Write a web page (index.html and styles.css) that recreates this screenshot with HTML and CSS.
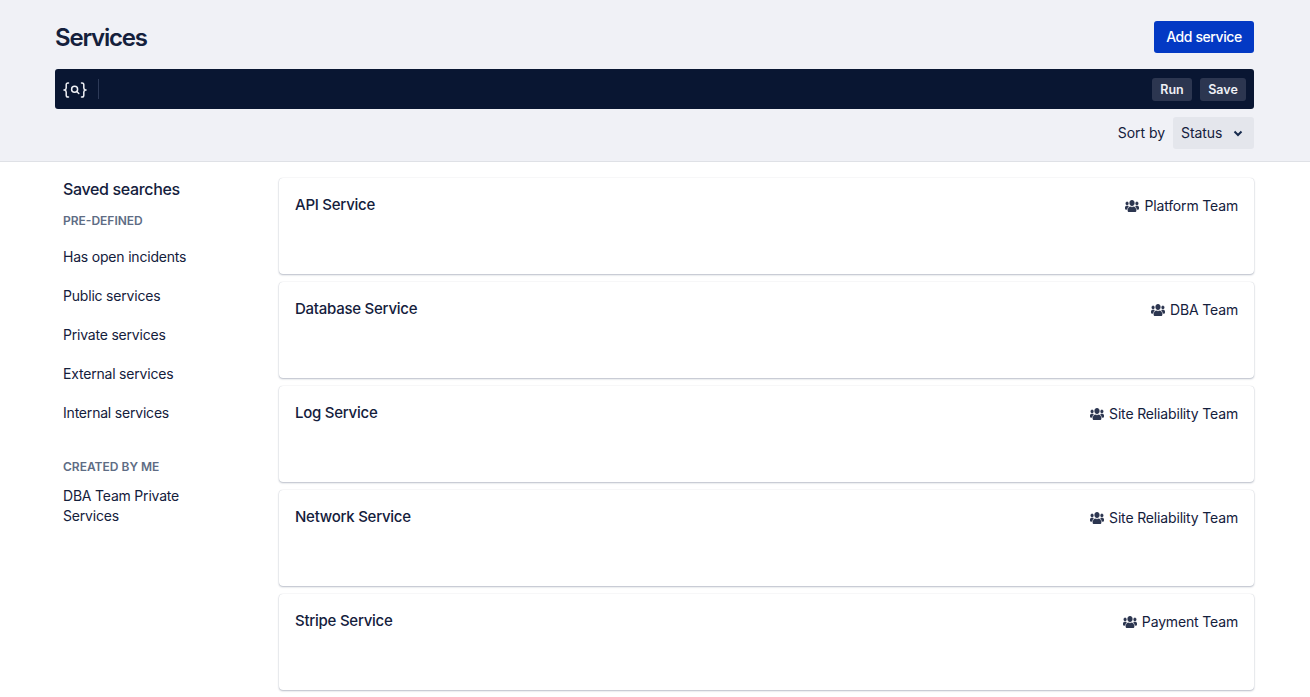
FILE: index.html
```html
<!DOCTYPE html>
<html>
<head>
  <title>Services</title>
  <link rel="stylesheet" href="styles.css">
</head>
<body>
  <svg class="icon-defs" width="0" height="0">
    <symbol id="users" viewBox="0 32 640 448" preserveAspectRatio="none">
      <path d="M96 224c35.3 0 64-28.7 64-64s-28.7-64-64-64-64 28.7-64 64 28.7 64 64 64zm448 0c35.3 0 64-28.7 64-64s-28.7-64-64-64-64 28.7-64 64 28.7 64 64 64zm32 32h-64c-17.6 0-33.5 7.1-45.1 18.6 40.3 22.1 68.9 62 75.1 109.4h66c17.7 0 32-14.3 32-32v-32c0-35.3-28.7-64-64-64zm-256 0c61.9 0 112-50.1 112-112S381.9 32 320 32 208 82.1 208 144s50.1 112 112 112zm76.8 32h-8.3c-20.8 10-43.9 16-68.5 16s-47.6-6-68.5-16h-8.3C179.6 288 128 339.6 128 403.2V432c0 26.5 21.5 48 48 48h288c26.5 0 48-21.5 48-48v-28.8c0-63.6-51.6-115.2-115.2-115.2zm-223.7-13.4C161.5 263.1 145.6 256 128 256H64c-35.3 0-64 28.7-64 64v32c0 17.7 14.3 32 32 32h65.9c6.3-47.4 34.9-87.3 75.2-109.4z"/>
    </symbol>
  </svg>

  <div class="page-header">
    <div class="title-row">
      <h1>Services</h1>
      <button class="add-btn">Add service</button>
    </div>
    <div class="query-bar">
      <svg class="query-icon" width="24" height="20" viewBox="0 -1.500 24 20" fill="none" stroke="#eef0f5" stroke-width="1.500" stroke-linecap="round">
        <path d="M5.500 2.500H5c-1.200 0-1.800.6-1.800 1.800v3.100c0 1.100-.5 1.700-1.700 2.100 1.200.4 1.700 1 1.700 2.100v3.100c0 1.200.6 1.800 1.800 1.800h.5"/>
        <path d="M18.500 2.500h.5c1.200 0 1.800.6 1.800 1.800v3.100c0 1.100.5 1.700 1.700 2.100-1.200.4-1.700 1-1.700 2.100v3.100c0 1.200-.6 1.800-1.800 1.800h-.5"/>
        <circle cx="11.600" cy="8.800" r="3"/>
        <path d="M13.800 11l2 2"/>
      </svg>
      <span class="query-divider"></span>
      <div class="query-actions">
        <button class="query-btn run-btn">Run</button>
        <button class="query-btn save-btn">Save</button>
      </div>
    </div>
    <div class="sort-row">
      <span>Sort by</span>
      <div class="sort-select">
        <span>Status</span>
        <svg width="10" height="7" viewBox="0 0 10 7" fill="none" stroke="#172b4d" stroke-width="2"><path d="M1.500 1.500L5 5l3.500-3.500"/></svg>
      </div>
    </div>
  </div>

  <div class="content">
    <div class="sidebar">
      <h3>Saved searches</h3>
      <h4>PRE-DEFINED</h4>
      <ul class="search-list">
        <li>Has open incidents</li>
        <li>Public services</li>
        <li>Private services</li>
        <li>External services</li>
        <li>Internal services</li>
      </ul>
      <h4 class="created">CREATED BY ME</h4>
      <ul class="search-list created-list">
        <li>DBA Team Private Services</li>
      </ul>
    </div>

    <div class="service-list">
      <div class="service-card">
        <span class="service-name">API Service</span>
        <span class="team"><svg class="team-icon"><use href="#users"/></svg>Platform Team</span>
      </div>
      <div class="service-card">
        <span class="service-name">Database Service</span>
        <span class="team"><svg class="team-icon"><use href="#users"/></svg>DBA Team</span>
      </div>
      <div class="service-card">
        <span class="service-name">Log Service</span>
        <span class="team"><svg class="team-icon"><use href="#users"/></svg>Site Reliability Team</span>
      </div>
      <div class="service-card">
        <span class="service-name">Network Service</span>
        <span class="team"><svg class="team-icon"><use href="#users"/></svg>Site Reliability Team</span>
      </div>
      <div class="service-card">
        <span class="service-name">Stripe Service</span>
        <span class="team"><svg class="team-icon"><use href="#users"/></svg>Payment Team</span>
      </div>
    </div>
  </div>
</body>
</html>
```

FILE: styles.css
```css
* {
  box-sizing: border-box;
}
body {
  margin: 0;
  background: #fff;
  color: #172b4d;
  font-family: Inter, "Liberation Sans", sans-serif;
  font-size: 14px;
  letter-spacing: -0.16px;
}
button {
  font-family: inherit;
  border: none;
}
.icon-defs {
  display: none;
}
.page-header {
  background: #f0f1f6;
  border-bottom: 1px solid #dfe1e6;
  height: 162px;
  padding: 21px 56px 0 55px;
}
.title-row {
  display: flex;
  justify-content: space-between;
  align-items: center;
  height: 32px;
}
h1 {
  margin: 0;
  font-size: 24px;
  font-weight: 600;
  letter-spacing: -1.2px;
  color: #14203c;
}
.add-btn {
  width: 100px;
  height: 32px;
  padding: 0 0 2px;
  background: #0339c4;
  color: #fff;
  border-radius: 3px;
  font-size: 14px;
  font-weight: 500;
  letter-spacing: -0.4px;
}
.query-bar {
  display: flex;
  align-items: center;
  height: 40px;
  margin-top: 16px;
  padding: 0 8px;
  background: #091632;
  border-radius: 3px;
}
.query-icon {
  flex: none;
}
.query-divider {
  width: 1px;
  height: 20px;
  margin-left: 11px;
  background: #2d3a58;
}
.query-actions {
  display: flex;
  gap: 8px;
  margin-left: auto;
}
.query-btn {
  height: 23px;
  padding: 0;
  background: #2c3650;
  color: #eef0f5;
  border-radius: 3px;
  font-size: 12.5px;
  font-weight: 600;
  letter-spacing: 0;
}
.run-btn {
  width: 40px;
}
.save-btn {
  width: 46px;
}
.sort-row {
  display: flex;
  justify-content: flex-end;
  align-items: center;
  gap: 8px;
  margin-top: 8px;
  color: #14203c;
  letter-spacing: -0.05px;
}
.sort-row span {
  position: relative;
  top: -1px;
}
.sort-select {
  display: flex;
  justify-content: space-between;
  align-items: center;
  width: 81px;
  height: 32px;
  padding: 0 11px 0 8px;
  background: #e4e6ec;
  border-radius: 3px;
}
.content {
  display: flex;
  align-items: flex-start;
  padding: 16px 56px 8px 63px;
}
.sidebar {
  flex: none;
  width: 216px;
  padding-right: 70px;
}
.sidebar h3 {
  margin: 1px 0 0;
  font-size: 16px;
  line-height: 20px;
  font-weight: 500;
  letter-spacing: -0.35px;
  color: #14203c;
}
.sidebar h4 {
  margin: 14px 0 0;
  font-size: 12px;
  line-height: 16px;
  font-weight: 600;
  letter-spacing: 0;
  color: #5e6c84;
}
.sidebar h4.created {
  margin-top: 27px;
}
.search-list {
  list-style: none;
  margin: 0;
  padding: 8px 0 0;
}
.created-list {
  padding-top: 1px;
}
.search-list li {
  padding: 10px 0 9px;
  line-height: 20px;
  color: #14203c;
  letter-spacing: -0.2px;
}
.service-list {
  flex: 1;
  display: flex;
  flex-direction: column;
  gap: 8px;
}
.service-card {
  display: flex;
  justify-content: space-between;
  align-items: flex-start;
  height: 96px;
  padding: 16px;
  background: #fff;
  border-radius: 4px;
  box-shadow: 0 1px 2px rgba(9, 30, 66, 0.28), 0 0 1px rgba(9, 30, 66, 0.2);
}
.service-name {
  margin-top: 1px;
  font-size: 15px;
  line-height: 20px;
  font-weight: 500;
  letter-spacing: -0.25px;
  color: #14203c;
}
.team {
  display: flex;
  align-items: center;
  line-height: 24px;
  color: #14203c;
}
.team-icon {
  width: 14px;
  height: 12px;
  margin-right: 5px;
  fill: #2c3650;
  stroke: #2c3650;
  stroke-width: 12;
}
```
